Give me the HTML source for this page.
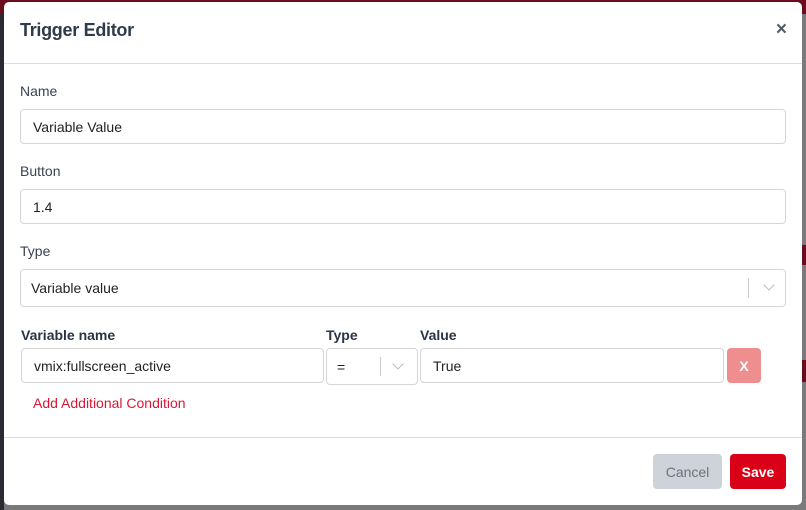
<!DOCTYPE html>
<html><head><meta charset="utf-8"><style>
*{box-sizing:border-box;margin:0;padding:0}
body{width:806px;height:510px;overflow:hidden;background:#7a7a7c;font-family:"Liberation Sans",sans-serif;position:relative}
.topbar{position:absolute;left:0;top:0;width:806px;height:14px;background:#6a0d1c}
.leftbar{position:absolute;left:0;top:14px;width:4px;height:496px;background:#2a2a30}
.modal{position:absolute;left:4px;top:2px;width:798px;height:503px;background:#fff;border-radius:5px}
.title{position:absolute;left:16px;top:18px;font-size:18px;font-weight:bold;color:#2f3b4a;letter-spacing:-0.3px}
.close{position:absolute;right:15px;top:17px;font-size:19px;color:#555c66;font-weight:bold}
.hr{position:absolute;left:0;width:798px;height:1px;background:#dcdcdc}
.lbl{position:absolute;font-size:14px;color:#3b4452}
.b{font-weight:bold;color:#2b3442}
.in{position:absolute;border:1px solid #d6d6d6;border-radius:4px;font-size:14px;color:#222;padding-left:12px;display:flex;align-items:center}
.chev{position:absolute;width:8px;height:8px;border-right:1.5px solid #bbb;border-bottom:1.5px solid #bbb;transform:rotate(45deg)}
.sep{position:absolute;width:1px;background:#ccc}
.btn{position:absolute;border-radius:4px;font-size:14px;display:flex;align-items:center;justify-content:center}
</style></head><body>
<div class="topbar"></div><div class="leftbar"></div>
<div style="position:absolute;right:0;top:245px;width:4px;height:20px;background:#6a0d1c"></div>
<div style="position:absolute;right:0;top:360px;width:4px;height:22px;background:#6a0d1c"></div>
<div class="modal">
<div class="title">Trigger Editor</div>
<div class="close">×</div>
<div class="hr" style="top:61px"></div>
<div class="lbl" style="left:16px;top:81px">Name</div>
<div class="in" style="left:16px;top:107px;width:766px;height:35px">Variable Value</div>
<div class="lbl" style="left:16px;top:161px">Button</div>
<div class="in" style="left:16px;top:187px;width:766px;height:35px">1.4</div>
<div class="lbl" style="left:16px;top:241px">Type</div>
<div class="in" style="left:16px;top:267px;width:766px;height:38px;padding-left:10px">Variable value
<div class="sep" style="left:727px;top:8px;height:20px"></div>
<div class="chev" style="left:744px;top:11px"></div></div>
<div class="lbl b" style="left:17px;top:325px">Variable name</div>
<div class="lbl b" style="left:322px;top:325px">Type</div>
<div class="lbl b" style="left:416px;top:325px">Value</div>
<div class="in" style="left:17px;top:346px;width:303px;height:35px">vmix:fullscreen_active</div>
<div class="in" style="left:322px;top:346px;width:92px;height:37px;padding-left:10px">=
<div class="sep" style="left:53px;top:8px;height:19px"></div>
<div class="chev" style="left:67px;top:11px"></div></div>
<div class="in" style="left:416px;top:346px;width:304px;height:35px">True</div>
<div class="btn" style="left:723px;top:346px;width:34px;height:35px;background:#ee8e8e;color:#fff;font-weight:bold">X</div>
<div class="lbl" style="left:29px;top:393px;color:#d91836">Add Additional Condition</div>
<div class="hr" style="top:435px"></div>
<div class="btn" style="left:649px;top:452px;width:69px;height:35px;background:#ced2d9;color:#6b7380">Cancel</div>
<div class="btn" style="left:726px;top:452px;width:56px;height:35px;background:#d90018;color:#fff;font-weight:bold">Save</div>
</div>
</body></html>
